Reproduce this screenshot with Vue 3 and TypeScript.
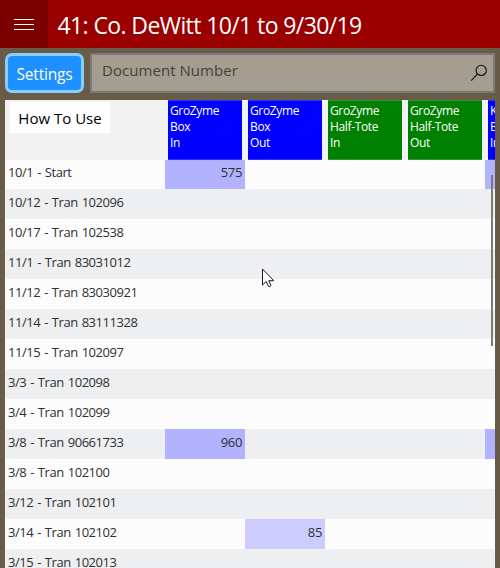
<script setup lang="ts">
interface Column {
  product: string
  unit: string
  direction: string
  tone: 'blue' | 'green'
}

interface Row {
  label: string
  values: Record<number, { text: string; tone: 'strong' | 'soft' }>
}

const columns: Column[] = [
  { product: 'GroZyme', unit: 'Box', direction: 'In', tone: 'blue' },
  { product: 'GroZyme', unit: 'Box', direction: 'Out', tone: 'blue' },
  { product: 'GroZyme', unit: 'Half-Tote', direction: 'In', tone: 'green' },
  { product: 'GroZyme', unit: 'Half-Tote', direction: 'Out', tone: 'green' },
  { product: 'K', unit: 'B', direction: 'In', tone: 'blue' },
]

const rows: Row[] = [
  { label: '10/1 - Start', values: { 0: { text: '575', tone: 'strong' }, 4: { text: '', tone: 'strong' } } },
  { label: '10/12 - Tran 102096', values: {} },
  { label: '10/17 - Tran 102538', values: {} },
  { label: '11/1 - Tran 83031012', values: {} },
  { label: '11/12 - Tran 83030921', values: {} },
  { label: '11/14 - Tran 83111328', values: {} },
  { label: '11/15 - Tran 102097', values: {} },
  { label: '3/3 - Tran 102098', values: {} },
  { label: '3/4 - Tran 102099', values: {} },
  { label: '3/8 - Tran 90661733', values: { 0: { text: '960', tone: 'strong' }, 4: { text: '', tone: 'strong' } } },
  { label: '3/8 - Tran 102100', values: {} },
  { label: '3/12 - Tran 102101', values: {} },
  { label: '3/14 - Tran 102102', values: { 1: { text: '85', tone: 'soft' } } },
  { label: '3/15 - Tran 102013', values: {} },
]
</script>

<template>
  <div class="page">
    <header class="bar">
      <button class="menu" aria-label="Menu"><i /><i /><i /></button>
      <h1 class="title">41: Co. DeWitt 10/1 to 9/30/19</h1>
    </header>

    <div class="tools">
      <button class="settings">Settings</button>
      <div class="search">
        <span class="hint">Document Number</span>
        <svg class="glass" width="18" height="18" viewBox="0 0 18 18">
          <circle cx="11.2" cy="6.4" r="5.1" />
          <path d="M7.4 10.2 1.2 16.6" />
        </svg>
      </div>
    </div>

    <main class="grid">
      <div class="head">
        <div class="corner"><button class="how">How To Use</button></div>
        <div v-for="(c, i) in columns" :key="i" class="col">
          <div class="tile" :class="c.tone">
            <span>{{ c.product }}</span>
            <span>{{ c.unit }}</span>
            <span>{{ c.direction }}</span>
          </div>
        </div>
      </div>
      <div v-for="row in rows" :key="row.label" class="row">
        <div class="label">{{ row.label }}</div>
        <div v-for="(c, i) in columns" :key="i" class="cell" :class="row.values[i]?.tone">{{ row.values[i]?.text }}</div>
      </div>
      <div class="thumb" />
    </main>

    <svg class="pointer" width="14" height="21" viewBox="0 0 14 21">
      <path d="M.5 1v16l3.7-3.5 2.3 4.9q1.4 1 2.5-.9l-2.2-4.8h5z" />
    </svg>
  </div>
</template>

<style>
body {
  margin: 0;
  overflow: hidden;
}
</style>

<style scoped>
.page {
  position: relative;
  display: flex;
  flex-direction: column;
  width: 500px;
  height: 568px;
  overflow: hidden;
  background: #685c49;
  font-family: 'Open Sans', 'Noto Sans', sans-serif;
}
button {
  font: inherit;
  border: 0;
  padding: 0;
}
.bar {
  display: flex;
  flex: none;
  height: 48px;
  background: #9a0000;
}
.menu {
  display: flex;
  flex-direction: column;
  gap: 4px;
  width: 48px;
  padding: 19px 14px 0;
  background: #7b0000;
}
.menu i {
  height: 1px;
  background: #fff;
}
.title {
  margin: 0;
  padding-left: 9.5px;
  color: #fff;
  font-size: 23px;
  font-weight: 400;
  line-height: 51px;
  letter-spacing: -0.6px;
  white-space: nowrap;
}
.tools {
  display: flex;
  flex: none;
  gap: 6px;
  height: 40px;
  padding: 5px 5px 7px;
}
.settings {
  box-sizing: border-box;
  width: 79px;
  border: 3px solid #87cefa;
  border-radius: 7px;
  background: #1e90ff;
  color: #fff;
  font-size: 15.5px;
  line-height: 36px;
  letter-spacing: -0.2px;
}
.search {
  box-sizing: border-box;
  display: flex;
  justify-content: space-between;
  flex: 1;
  border: 2px solid #7a7a7a;
  background: #a49d90;
  padding: 0 5px 0 10px;
}
.hint {
  color: #45423c;
  font-size: 15px;
  line-height: 30px;
  letter-spacing: 0.05px;
}
.glass {
  margin-top: 9px;
  fill: none;
  stroke: #111;
  stroke-width: 1.1;
}
.grid {
  position: relative;
  flex: 1;
  min-height: 0;
  margin: 0 5px;
  overflow: hidden;
  background: #fcfcfc;
}
.head,
.row {
  display: grid;
  grid-template-columns: 160px repeat(5, 80px);
}
.head {
  height: 60px;
  background: #f2f2f2;
}
.corner {
  padding: 2px 5px;
}
.how {
  width: 100px;
  height: 31px;
  background: #fff;
  color: #000;
  font-size: 15px;
}
.col {
  padding: 0 3px;
}
.tile {
  box-sizing: border-box;
  display: flex;
  flex-direction: column;
  height: 60px;
  padding: 2px 2px 0;
  border: solid;
  border-width: 1px 0;
  color: #fff;
  font-size: 12px;
  line-height: 16px;
  letter-spacing: -0.35px;
}
.blue {
  background: #0000ff;
  border-color: #3030f5;
}
.green {
  background: #008000;
  border-color: #309430;
}
.row {
  height: 30px;
  color: #303030;
  font-size: 13px;
  line-height: 27px;
  letter-spacing: -0.45px;
  word-spacing: 1px;
}
.row:nth-child(2) {
  height: 29px;
  line-height: 25px;
}
.row:nth-child(odd) {
  background: #eeeff1;
}
.label {
  padding-left: 3px;
  white-space: nowrap;
}
.cell {
  padding-right: 3px;
  text-align: right;
  letter-spacing: -0.35px;
}
.strong {
  background: #b2b2ff;
}
.soft {
  background: #ccccff;
}
.thumb {
  position: absolute;
  right: 2px;
  top: 75px;
  width: 2px;
  height: 171px;
  background: #7a7a7a;
}
.pointer {
  position: absolute;
  left: 262px;
  top: 268px;
  fill: #fff;
  stroke: #161622;
  stroke-width: 1;
}
</style>
